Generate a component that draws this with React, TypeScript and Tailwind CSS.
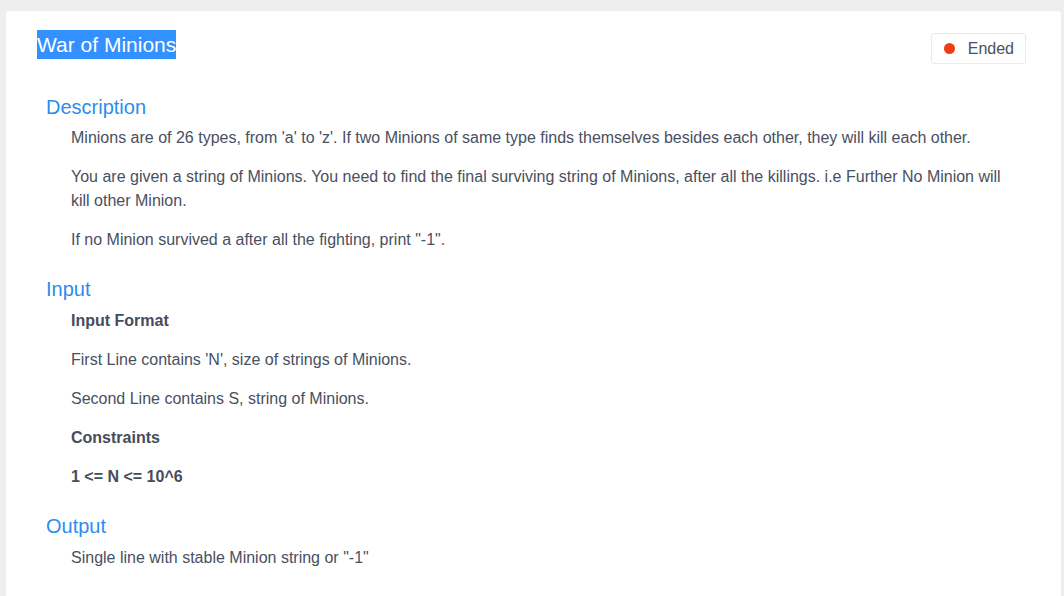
import React from "react";

const font = { fontFamily: '"Liberation Sans", Arial, sans-serif' };

function Heading({ children, tight }: { children: React.ReactNode; tight?: boolean }) {
  return (
    <h2
      className={
        "pl-[9px] text-[20px] leading-[28px] text-[#2d8cf0] font-normal " +
        (tight ? "mb-[5px]" : "mb-[6px]")
      }
    >
      {children}
    </h2>
  );
}

function P({ children, bold }: { children: React.ReactNode; bold?: boolean }) {
  return (
    <p
      className={
        "pl-[34px] pr-[20px] text-[16px] leading-[24px] mb-[15px] " +
        (bold ? "font-bold text-[#464c5b]" : "text-[#495060]")
      }
    >
      {children}
    </p>
  );
}

export default function App() {
  return (
    <div className="min-h-[596px] bg-[#eeeeee] pt-[11px] pl-[6px] pr-[3px]" style={font}>
      <div className="bg-white rounded-[4px] min-h-[585px] pt-[19px] pl-[31px] pr-[35px] pb-[20px]">
        <div className="flex items-start justify-between">
          <span className="inline-block bg-[#3390ff] text-white text-[21px] leading-[29px]">
            War of Minions
          </span>
          <div className="mt-[3px] h-[31px] flex items-center border border-[#e9eaec] rounded-[3px] pl-[12px] pr-[11px] bg-white">
            <span className="w-[11px] h-[11px] rounded-full bg-[#ed3f14]" />
            <span className="ml-[13px] text-[16px] text-[#495060]">Ended</span>
          </div>
        </div>

        <div className="mt-[29px]">
          <Heading tight>Description</Heading>
          <P>
            Minions are of 26 types, from 'a' to 'z'. If two Minions of same type finds themselves besides each other, they will kill each other.
          </P>
          <P>
            You are given a string of Minions. You need to find the final surviving string of Minions, after all the killings. i.e Further No Minion will kill other Minion.
          </P>
          <P>If no Minion survived a after all the fighting, print "-1".</P>
        </div>

        <div className="mt-[23px]">
          <Heading>Input</Heading>
          <P bold>Input Format</P>
          <P>First Line contains 'N', size of strings of Minions.</P>
          <P>Second Line contains S, string of Minions.</P>
          <P bold>Constraints</P>
          <P bold>1 &lt;= N &lt;= 10^6</P>
        </div>

        <div className="mt-[23px]">
          <Heading>Output</Heading>
          <P>Single line with stable Minion string or "-1"</P>
        </div>
      </div>
    </div>
  );
}
